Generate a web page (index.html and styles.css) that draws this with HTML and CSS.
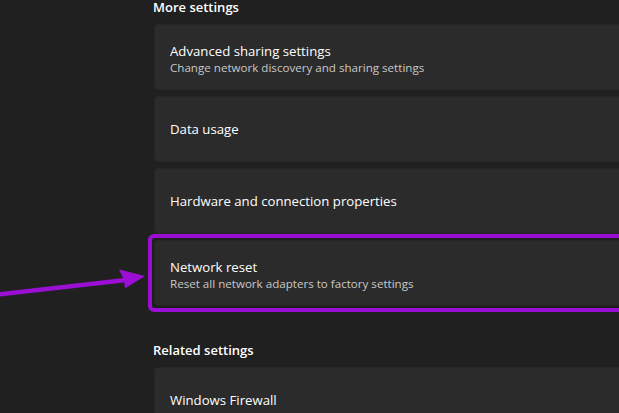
FILE: index.html
```html
<!DOCTYPE html>
<html>
<head>
<meta charset="utf-8">
<link rel="stylesheet" href="styles.css">
</head>
<body>
<div class="page">
  <div class="content">
    <h2 class="section-title first">More settings</h2>
    <div class="card two-line">
      <div class="card-title">Advanced sharing settings</div>
      <div class="card-sub">Change network discovery and sharing settings</div>
    </div>
    <div class="card">
      <div class="card-title">Data usage</div>
    </div>
    <div class="card">
      <div class="card-title">Hardware and connection properties</div>
    </div>
    <div class="highlight">
      <div class="card two-line">
        <div class="card-title">Network reset</div>
        <div class="card-sub">Reset all network adapters to factory settings</div>
      </div>
    </div>
    <h2 class="section-title">Related settings</h2>
    <div class="card">
      <div class="card-title">Windows Firewall</div>
    </div>
  </div>
  <svg class="arrow" width="160" height="40" viewBox="0 260 160 40" xmlns="http://www.w3.org/2000/svg">
    <line x1="-2" y1="294.5" x2="126" y2="280" stroke="#9a0fd3" stroke-width="4.5"/>
    <polygon points="145,276 119,269.5 124,280 125,288.5" fill="#9a0fd3"/>
  </svg>
</div>
</body>
</html>
```

FILE: styles.css
```css
html, body {
  margin: 0;
  padding: 0;
  background: #202020;
}
body {
  width: 619px;
  height: 413px;
  overflow: hidden;
  font-family: "Open Sans", "Noto Sans", sans-serif;
  color: #ffffff;
}
.page {
  position: relative;
  width: 619px;
  height: 413px;
  overflow: hidden;
}
.content {
  padding-left: 154px;
  width: 520px;
}
.section-title {
  margin: 28px 0 7px -1px;
  font-size: 13px;
  font-weight: 600;
  line-height: 20px;
  color: #ffffff;
}
.section-title.first {
  margin-top: -3px;
  margin-bottom: 7px;
}
.card {
  box-sizing: border-box;
  height: 66px;
  margin-bottom: 6px;
  background: #2b2b2b;
  border: 1px solid #262626;
  border-radius: 4px;
  padding-left: 15px;
  display: flex;
  flex-direction: column;
  justify-content: center;
}
.card-title {
  font-size: 13.2px;
  line-height: 18px;
  color: #ffffff;
}
.card-sub {
  font-size: 11.6px;
  line-height: 16px;
  color: #c8c8c8;
}
.two-line {
  padding-top: 3px;
}
.highlight {
  margin: -6px 0 0 -6px;
  border: 4px solid #9a0fd3;
  border-radius: 6px;
  padding: 2px;
  background: #1e1e1e;
}
.highlight .card {
  margin-bottom: 0;
}
.arrow {
  position: absolute;
  left: 0;
  top: 260px;
}
```
